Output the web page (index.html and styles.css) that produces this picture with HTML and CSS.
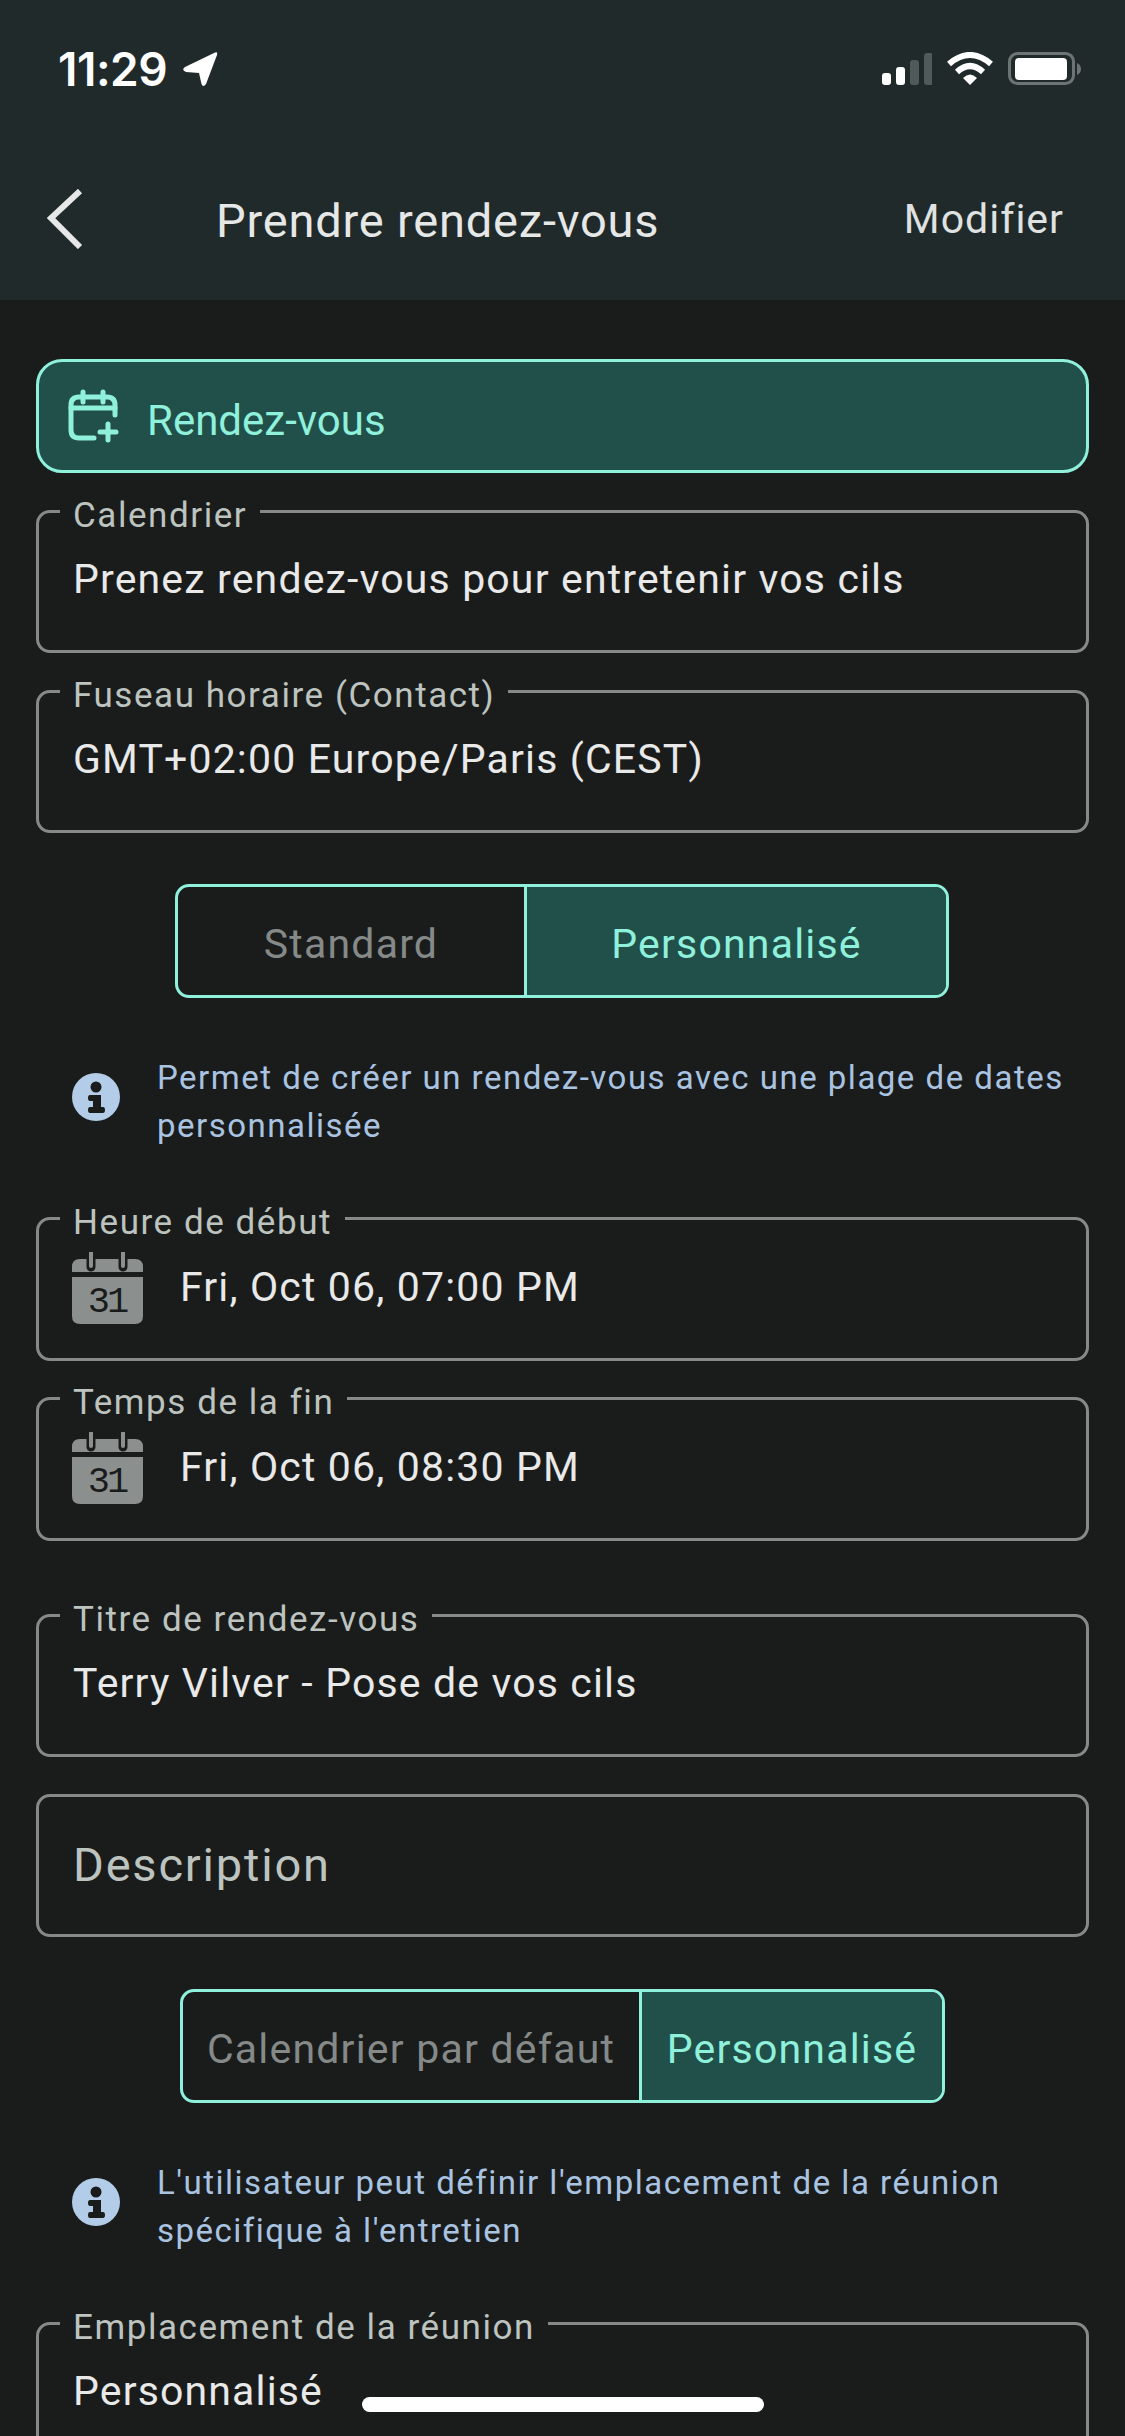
FILE: index.html
```html
<!DOCTYPE html>
<html lang="fr">

<head>
    <meta charset="UTF-8">
    <meta name="viewport" content="width=device-width, initial-scale=1.0">
    <title>Prendre rendez-vous</title>
    <link rel="stylesheet" href="styles.css">
</head>

<body>
    <header class="app-header">
        <div class="status-bar">
            <div class="status-time">
                <span>11:29</span>
                <svg width="36" height="36" viewBox="0 0 36 36">
                    <path d="M32 2 Q36 0 35 4 L24 33 Q21 37 19.500 33 L17 22 L4 21 Q-1 19 3 16 Z" fill="#fff" />
                </svg>
            </div>
            <div class="status-icons">
                <svg width="50" height="33" viewBox="0 0 50 33">
                    <rect x="0" y="20" width="9" height="12" rx="3" fill="#fff" />
                    <rect x="14" y="14" width="9" height="18" rx="3" fill="#fff" />
                    <rect x="28" y="7" width="9" height="25" rx="3" fill="#505a59" />
                    <rect x="42" y="0" width="9" height="32" rx="3" fill="#505a59" />
                </svg>
                <svg class="wifi" width="46" height="34" viewBox="0 0 46 34">
                    <path d="M2 12 Q23 -6 44 12" fill="none" stroke="#fff" stroke-width="6" />
                    <path d="M10 20 Q23 8 36 20" fill="none" stroke="#fff" stroke-width="6" />
                    <path d="M16 26 Q23 19 30 26 L23 33 Z" fill="#fff" />
                </svg>
                <svg class="battery" width="74" height="34" viewBox="0 0 74 34">
                    <rect x="1.500" y="1.500" width="64" height="30" rx="8" fill="none" stroke="#6d7574" stroke-width="3" />
                    <rect x="7" y="6" width="52" height="22" rx="4" fill="#fff" />
                    <path d="M69 11 Q73 13 73 17 Q73 21 69 23 Z" fill="#6d7574" />
                </svg>
            </div>
        </div>
        <nav class="nav-bar">
            <svg class="back" width="36" height="60" viewBox="0 0 36 60">
                <polyline points="33,2 4,29 33,58" fill="none" stroke="#e6e8e7" stroke-width="6" />
            </svg>
            <h1>Prendre rendez-vous</h1>
            <span class="nav-action">Modifier</span>
        </nav>
    </header>

    <main class="content">
        <!-- Section title -->
        <div class="section-tab">
            <svg width="52" height="56" viewBox="0 0 52 56" fill="none" stroke="#8ff0db" stroke-width="5" stroke-linecap="round">
                <path d="M27 50 H12 Q4 50 4 42 V17 Q4 9 12 9 H40 Q48 9 48 17 V27" />
                <path d="M4 20 H48" />
                <path d="M16 4 V14" />
                <path d="M36 4 V14" />
                <path d="M41 36 V52" />
                <path d="M33 44 H49" />
            </svg>
            <span>Rendez-vous</span>
        </div>

        <fieldset class="field">
            <legend>Calendrier</legend>
            <div class="field-value">Prenez rendez-vous pour entretenir vos cils</div>
        </fieldset>

        <fieldset class="field">
            <legend>Fuseau horaire (Contact)</legend>
            <div class="field-value">GMT+02:00 Europe/Paris (CEST)</div>
        </fieldset>

        <div class="toggle toggle-dates">
            <div class="toggle-item">Standard</div>
            <div class="toggle-item active">Personnalisé</div>
        </div>

        <div class="info-row">
            <svg width="48" height="48" viewBox="0 0 48 48">
                <circle cx="24" cy="24" r="24" fill="#b3cde8" />
                <circle cx="24" cy="14" r="5.500" fill="#1a1c1c" />
                <path d="M18 22 H29 V34 H31 Q33 34 33 37 Q33 40 31 40 H18 Q16 40 16 37 Q16 34 18 34 H21 V28 H18 Q16 28 16 25 Q16 22 18 22 Z" fill="#1a1c1c" />
            </svg>
            <p>Permet de créer un rendez-vous avec une plage de dates personnalisée</p>
        </div>

        <fieldset class="field field-date">
            <legend>Heure de début</legend>
            <div class="field-value">
                <svg width="72" height="72" viewBox="0 0 72 72">
                    <path d="M8 7 H63 Q71 7 71 15 V20 H0 V15 Q0 7 8 7 Z" fill="#8b908e" />
                    <path d="M0 25 H71 V64 Q71 72 63 72 H8 Q0 72 0 64 Z" fill="#8b908e" />
                    <path d="M19 0 V15 M51 0 V15" stroke="#1a1c1c" stroke-width="9" stroke-linecap="round" />
                    <path d="M19 0 V14 M51 0 V14" stroke="#8b908e" stroke-width="4" stroke-linecap="round" />
                    <text x="35" y="60" text-anchor="middle" class="cal-day">31</text>
                </svg>
                <span>Fri, Oct 06, 07:00 PM</span>
            </div>
        </fieldset>

        <fieldset class="field field-date">
            <legend>Temps de la fin</legend>
            <div class="field-value">
                <svg width="72" height="72" viewBox="0 0 72 72">
                    <path d="M8 7 H63 Q71 7 71 15 V20 H0 V15 Q0 7 8 7 Z" fill="#8b908e" />
                    <path d="M0 25 H71 V64 Q71 72 63 72 H8 Q0 72 0 64 Z" fill="#8b908e" />
                    <path d="M19 0 V15 M51 0 V15" stroke="#1a1c1c" stroke-width="9" stroke-linecap="round" />
                    <path d="M19 0 V14 M51 0 V14" stroke="#8b908e" stroke-width="4" stroke-linecap="round" />
                    <text x="35" y="60" text-anchor="middle" class="cal-day">31</text>
                </svg>
                <span>Fri, Oct 06, 08:30 PM</span>
            </div>
        </fieldset>

        <fieldset class="field field-title">
            <legend>Titre de rendez-vous</legend>
            <div class="field-value">Terry Vilver - Pose de vos cils</div>
        </fieldset>

        <div class="field-empty">Description</div>

        <div class="toggle toggle-place">
            <div class="toggle-item">Calendrier par défaut</div>
            <div class="toggle-item active">Personnalisé</div>
        </div>

        <div class="info-row">
            <svg width="48" height="48" viewBox="0 0 48 48">
                <circle cx="24" cy="24" r="24" fill="#b3cde8" />
                <circle cx="24" cy="14" r="5.500" fill="#1a1c1c" />
                <path d="M18 22 H29 V34 H31 Q33 34 33 37 Q33 40 31 40 H18 Q16 40 16 37 Q16 34 18 34 H21 V28 H18 Q16 28 16 25 Q16 22 18 22 Z" fill="#1a1c1c" />
            </svg>
            <p>L'utilisateur peut définir l'emplacement de la réunion spécifique à l'entretien</p>
        </div>

        <fieldset class="field">
            <legend>Emplacement de la réunion</legend>
            <div class="field-value">Personnalisé</div>
        </fieldset>
    </main>

    <div class="home-indicator"></div>
</body>

</html>
```

FILE: styles.css
```css
* {
    box-sizing: border-box;
}

html,
body {
    margin: 0;
    height: 2436px;
    overflow: hidden;
}

body {
    position: relative;
    background-color: #1a1c1c;
    font-family: Roboto, "Liberation Sans", sans-serif;
    color: #e8e9e8;
}

/* Header */
.app-header {
    height: 300px;
    background-color: #212a2a;
}

.status-bar {
    height: 138px;
    display: flex;
    justify-content: space-between;
    align-items: center;
    padding: 0 43px 0 58px;
}

.status-time {
    display: flex;
    align-items: center;
    gap: 15px;
    font-family: Inter, sans-serif;
    font-weight: 600;
    font-size: 46px;
    letter-spacing: -0.5px;
    color: #fff;
}

.status-icons {
    display: flex;
    align-items: center;
    gap: 15px;
}

.nav-bar {
    height: 162px;
    display: flex;
    align-items: center;
    padding: 0 61px 0 47px;
}

.nav-bar .back {
    flex: none;
}

.nav-bar h1 {
    margin: 3px 0 0 133px;
    flex: 1;
    font-size: 47px;
    font-weight: 400;
    letter-spacing: 0.8px;
    color: #e6e8e7;
}

.nav-action {
    font-size: 41px;
    letter-spacing: 1px;
    color: #dfe2e1;
}

/* Content */
.content {
    padding: 59px 36px 0 36px;
}

.section-tab {
    height: 114px;
    display: flex;
    align-items: center;
    gap: 28px;
    padding-left: 28px;
    margin-bottom: 16px;
    border: 3px solid #8ff0db;
    border-radius: 26px;
    background-color: #214f49;
    font-size: 42px;
    color: #8ff0db;
}

.section-tab span {
    padding-top: 8px;
}

.field {
    min-width: 0;
    height: 164px;
    margin: 0 0 16px;
    padding: 0 0 0 34px;
    border: 3px solid #858a88;
    border-radius: 14px;
}

.field legend {
    height: 44px;
    margin-left: -13px;
    padding: 10px 13px 0;
    font-size: 35px;
    line-height: 34px;
    letter-spacing: 1.55px;
    color: #bdc3bf;
}

.field-value {
    display: flex;
    align-items: center;
    gap: 36px;
    height: 92px;
    font-size: 41px;
    letter-spacing: 1.15px;
    color: #e8e9e8;
}

.field-date {
    height: 165px;
    margin-bottom: 15px;
}

.field-date .field-value {
    height: 94px;
}

.field-date svg {
    flex: none;
    margin: 2px 0 0 -1px;
}

.cal-day {
    font-family: "Liberation Mono", monospace;
    font-size: 37px;
    letter-spacing: -3px;
    fill: #1a1c1c;
}

.field-title {
    margin-top: 52px;
}

.field-empty {
    height: 143px;
    display: flex;
    align-items: center;
    margin-top: 37px;
    padding: 0 0 2px 34px;
    border: 3px solid #858a88;
    border-radius: 14px;
    font-size: 47px;
    letter-spacing: 1.8px;
    color: #bdc3bf;
}

/* Two-part switches */
.toggle {
    display: flex;
    height: 114px;
    border: 3px solid #8ff0db;
    border-radius: 14px;
    overflow: hidden;
    font-size: 41px;
    letter-spacing: 1.2px;
}

.toggle-item {
    display: flex;
    justify-content: center;
    align-items: center;
    padding-top: 6px;
    color: #858a88;
}

.toggle-item.active {
    border-left: 3px solid #8ff0db;
    background-color: #214f49;
    color: #8ff0db;
}

.toggle-dates {
    width: 774px;
    margin: 51px 0 0 139px;
}

.toggle-dates .toggle-item {
    width: 346px;
}

.toggle-dates .toggle-item.active {
    width: 422px;
}

.toggle-place {
    width: 765px;
    margin: 52px 0 0 144px;
}

.toggle-place .toggle-item {
    width: 456px;
}

.toggle-place .toggle-item.active {
    width: 303px;
}

/* Hints */
.info-row {
    display: flex;
    align-items: center;
    gap: 37px;
    margin: 56px 0 46px 36px;
}

.info-row svg {
    flex: none;
    margin-bottom: 10px;
}

.info-row p {
    margin: 0;
    font-size: 33px;
    line-height: 48px;
    letter-spacing: 1.5px;
    color: #a9c3e0;
}

.home-indicator {
    position: absolute;
    left: 362px;
    top: 2397px;
    width: 402px;
    height: 15px;
    border-radius: 8px;
    background-color: #fff;
}
```
